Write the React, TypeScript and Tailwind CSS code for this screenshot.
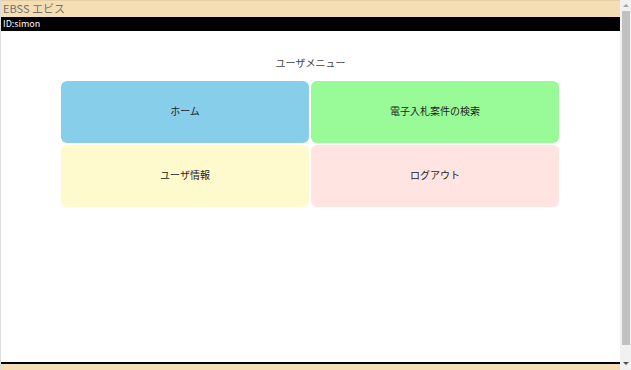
const menu = [
  { label: 'ホーム', bg: 'bg-[#87ceeb]' },
  { label: '電子入札案件の検索', bg: 'bg-[#98fb98]' },
  { label: 'ユーザ情報', bg: 'bg-[#fffacd]' },
  { label: 'ログアウト', bg: 'bg-[#ffe4e1]' },
];

// 擬似スクロールバー
function ScrollBar() {
  return (
    <div className="w-[11px] h-full bg-[#f1f1f1] flex flex-col items-center">
      <div className="h-[11px] flex items-center justify-center">
        <div className="w-0 h-0 border-x-[3px] border-x-transparent border-b-[3px] border-b-[#a3a3a3]" />
      </div>
      <div className="w-[8px] h-[334px] bg-[#c1c1c1]" />
      <div className="flex-1" />
      <div className="h-[14px] flex items-center justify-center">
        <div className="w-0 h-0 border-x-[3px] border-x-transparent border-t-[3px] border-t-[#505050]" />
      </div>
    </div>
  );
}

export default function App() {
  return (
    <div
      className="w-[631px] h-[370px] overflow-hidden flex bg-white"
      style={{ fontFamily: '"Noto Sans CJK JP", "Noto Sans", sans-serif' }}
    >
      <div className="flex-1 flex flex-col border-l border-[#dcdcdc] overflow-hidden">
        <div className="h-[17px] shrink-0 bg-[#f5deb3] border-t border-[#e6cfa4] px-[2px] text-[11px] leading-[15px] text-[#707070]">
          EBSS エビス
        </div>
        <div className="h-[14px] shrink-0 bg-black px-[2px] text-[9px] leading-[14px] text-white">
          ID:simon
        </div>
        <div className="h-[331px] shrink-0 pt-[25px]">
          <div className="text-center text-[10px] leading-[14px] text-[#444]">ユーザメニュー</div>
          <div className="mt-[11px] w-[498px] ml-[60px] grid grid-cols-2 gap-[2px]">
            {menu.map((m) => (
              <div
                key={m.label}
                className={`${m.bg} h-[62px] rounded-[6px] flex items-center justify-center pb-[2px] text-[10px] leading-[14px] text-[#222]`}
              >
                {m.label}
              </div>
            ))}
          </div>
        </div>
        <div className="shrink-0 border-t-2 border-black bg-[#f5deb3] h-[20px] px-[2px] pt-[3px] text-[11px] leading-[14px] text-[#707070]">
          (C)Simon Ltd.
        </div>
      </div>
      <ScrollBar />
    </div>
  );
}
